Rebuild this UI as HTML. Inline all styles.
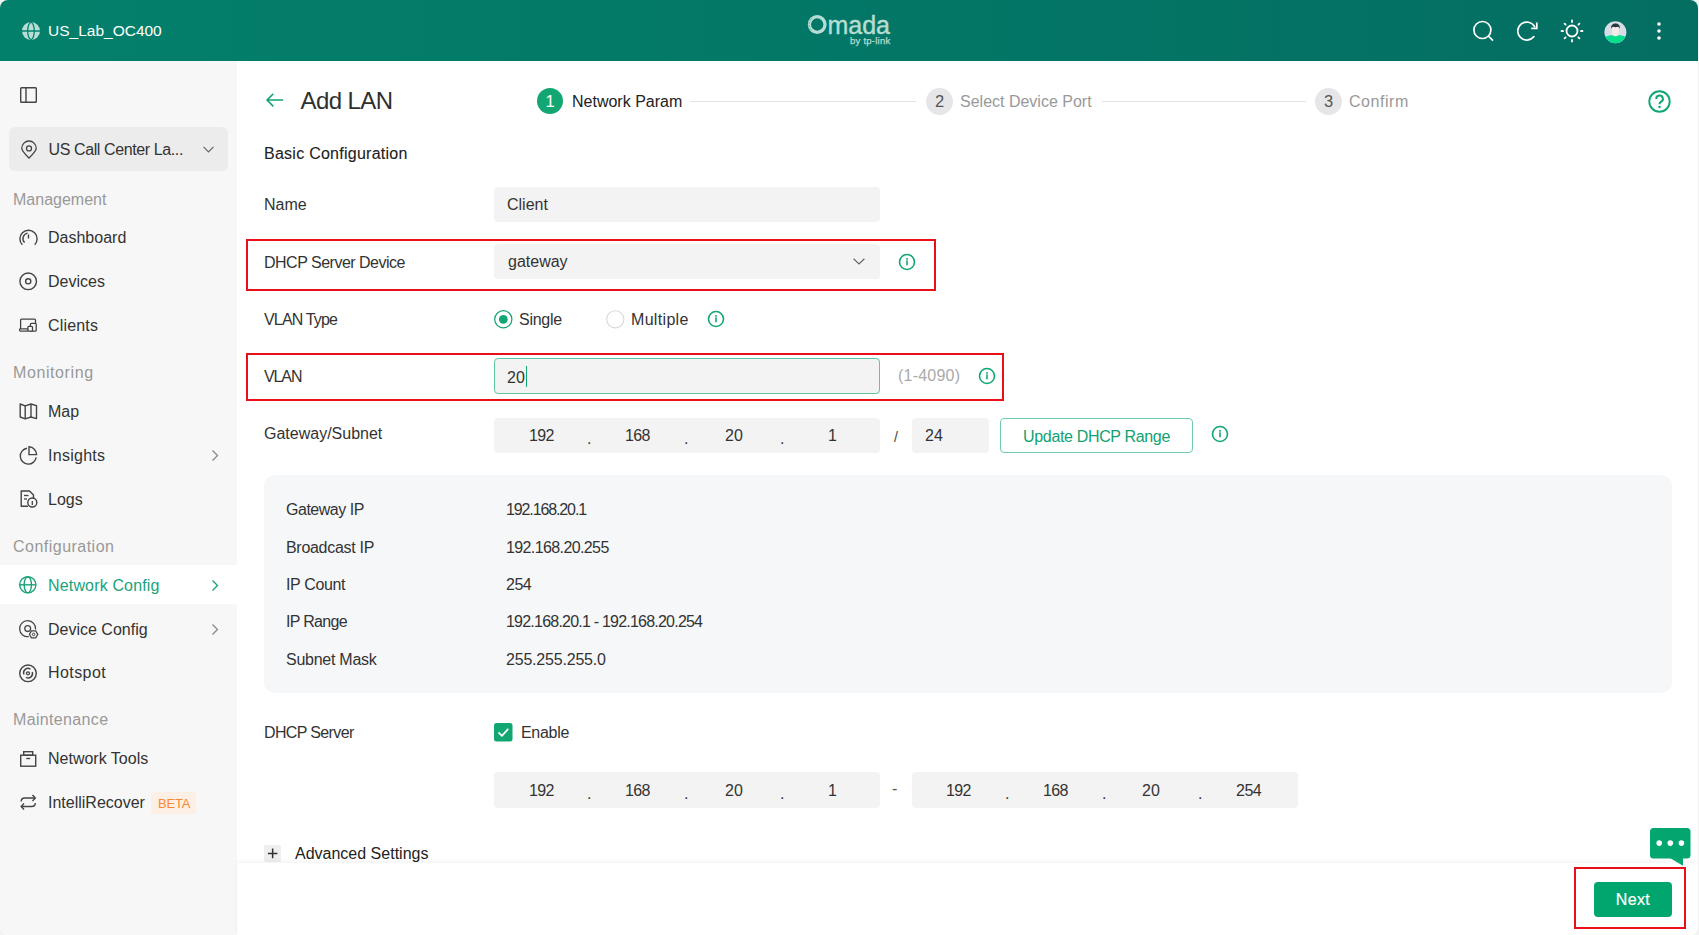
<!DOCTYPE html>
<html><head><meta charset="utf-8">
<style>
*{box-sizing:border-box;margin:0;padding:0}
html,body{width:1699px;height:935px;overflow:hidden;background:#f2f2f2;font-family:"Liberation Sans",sans-serif;color:#333}
.abs{position:absolute}
#win{position:absolute;left:0;top:0;width:1698px;height:935px;border-radius:8px;overflow:hidden;background:#fff}
#hdr{position:absolute;left:0;top:0;width:1698px;height:61px;background:linear-gradient(90deg,#03806b 0%,#037767 50%,#046e62 100%)}
#side{position:absolute;left:0;top:61px;width:237px;height:874px;background:#f7f7f7}
.t{position:absolute;white-space:nowrap;font-size:16px;line-height:20px}
.sec{color:#999;font-size:16px}
.nav{color:#333}
.lbl{color:#333}
.inp{position:absolute;background:#f3f3f3;border-radius:4px}
.red{position:absolute;border:2px solid #ea0e19}
svg{position:absolute;overflow:visible}
</style></head><body>
<div id="win">
<div id="hdr">
  <svg style="left:22px;top:22px" width="18" height="18" viewBox="0 0 18 18">
    <circle cx="9" cy="9" r="9" fill="#b8ddd5"/>
    <ellipse cx="9" cy="9" rx="3.3" ry="8.6" fill="none" stroke="#03806b" stroke-width="1.3"/>
    <line x1="0" y1="9" x2="18" y2="9" stroke="#03806b" stroke-width="1.3"/>
  </svg>
  <div class="t" style="left:48px;top:21px;color:#fff;font-size:15.5px">US_Lab_OC400</div>
  <svg style="left:806px;top:13px" width="24" height="24" viewBox="0 0 24 24">
    <circle cx="11.2" cy="11.5" r="7.8" fill="none" stroke="#b6ddd3" stroke-width="3.3"/>
    <path d="M5.8 5.2 A8.6 8.6 0 0 0 5.8 17.8" fill="none" stroke="#037a68" stroke-width="0.7" stroke-dasharray="0.6 0.9"/>
  </svg>
  <div class="t" style="left:827.5px;top:10.5px;color:#b6ddd3;font-size:25px;line-height:28px;-webkit-text-stroke:0.4px #b6ddd3;letter-spacing:-0.05px">mada</div>
  <div class="t" style="left:850px;top:36px;color:#b6ddd3;font-size:9.5px;line-height:10px;-webkit-text-stroke:0.25px #b6ddd3;letter-spacing:0.25px">by tp-link</div>
  <!-- search -->
  <svg style="left:1473px;top:20px" width="22" height="22" viewBox="0 0 22 22">
    <circle cx="9.4" cy="10" r="8.5" fill="none" stroke="#fff" stroke-width="1.7"/>
    <line x1="15.4" y1="16" x2="20" y2="20.6" stroke="#fff" stroke-width="1.7"/>
  </svg>
  <!-- refresh -->
  <svg style="left:1517px;top:20px" width="22" height="22" viewBox="0 0 22 22">
    <path d="M16.9 16.6 A9 9 0 1 1 17.6 6.6" fill="none" stroke="#fff" stroke-width="1.7" stroke-linecap="round"/>
    <path d="M19.8 2.6 V8.4 H14.2" fill="none" stroke="#fff" stroke-width="1.7"/>
  </svg>
  <!-- sun -->
  <svg style="left:1560.5px;top:20px" width="22" height="22" viewBox="0 0 22 22">
    <circle cx="11" cy="11" r="5.5" fill="none" stroke="#fff" stroke-width="1.8"/>
    <g stroke="#fff" stroke-width="1.8" stroke-linecap="round">
      <line x1="11" y1="0.5" x2="11" y2="2"/><line x1="11" y1="20" x2="11" y2="21.5"/>
      <line x1="0.5" y1="11" x2="2" y2="11"/><line x1="20" y1="11" x2="21.5" y2="11"/>
      <line x1="3.6" y1="3.6" x2="4.6" y2="4.6"/><line x1="17.4" y1="17.4" x2="18.4" y2="18.4"/>
      <line x1="3.6" y1="18.4" x2="4.6" y2="17.4"/><line x1="17.4" y1="4.6" x2="18.4" y2="3.6"/>
    </g>
  </svg>
  <!-- avatar -->
  <svg style="left:1604px;top:20.5px" width="23" height="23" viewBox="0 0 23 23">
    <defs><clipPath id="av"><circle cx="11.4" cy="11.3" r="11"/></clipPath></defs>
    <g clip-path="url(#av)">
      <rect width="23" height="23" fill="#d6dde6"/>
      <path d="M8.2 6 H14.8 V14.5 C14.8 16 13 16.5 11.5 16.5 C10 16.5 8.2 16 8.2 14.5 Z" fill="#f7ebe8"/>
      <path d="M-1 23 V16.6 C3 14.6 7 14.3 9 14.3 C10 15.6 13 15.6 14 14.3 C16 14.3 20 14.6 24 16.6 V23 Z" fill="#05de8c"/>
      <path d="M7 7.8 C6.8 4 9 2.6 11.5 2.6 C14 2.6 16.2 4 16 7.8 C15.3 6.6 14.6 5.8 13.8 5.8 C12.5 6.4 10.5 6.4 9.2 5.8 C8.4 5.8 7.7 6.6 7 7.8Z" fill="#263840"/>
    </g>
  </svg>
  <!-- kebab -->
  <svg style="left:1657px;top:22px" width="4" height="18" viewBox="0 0 4 18">
    <circle cx="2" cy="2" r="1.8" fill="#fff"/><circle cx="2" cy="9" r="1.8" fill="#fff"/><circle cx="2" cy="16" r="1.8" fill="#fff"/>
  </svg>
</div>

<div id="side">
  <!-- toggle -->
  <svg style="left:20px;top:25.5px" width="17" height="16" viewBox="0 0 17 16">
    <rect x="0.7" y="0.7" width="15.6" height="14.6" rx="0.8" fill="none" stroke="#444" stroke-width="1.4"/>
    <line x1="6" y1="0.7" x2="6" y2="15.3" stroke="#444" stroke-width="1.4"/>
  </svg>
  <div class="abs" style="left:9px;top:66px;width:219px;height:44px;background:#ececec;border-radius:6px"></div>
  <svg style="left:21px;top:80px" width="16" height="18" viewBox="0 0 16 18">
    <path d="M8 17 C3.8 12.8 0.8 10 0.8 7.2 A7.2 7.2 0 0 1 15.2 7.2 C15.2 10 12.2 12.8 8 17Z" fill="none" stroke="#444" stroke-width="1.3"/>
    <circle cx="8" cy="7.4" r="2.5" fill="none" stroke="#444" stroke-width="1.3"/>
  </svg>
  <div class="t nav" style="left:48.5px;top:79px;letter-spacing:-0.39px">US Call Center La...</div>
  <svg style="left:202.5px;top:84.5px" width="11" height="7" viewBox="0 0 11 7">
    <path d="M0.5 0.8 L5.5 5.8 L10.5 0.8" fill="none" stroke="#666" stroke-width="1.2"/>
  </svg>

  <div class="t sec" style="left:13px;top:129px">Management</div>
  <svg style="left:19px;top:168px" width="19" height="17" viewBox="0 0 19 17">
    <path d="M3.3 15.8 A8.6 8.6 0 1 1 15.7 15.8" fill="none" stroke="#444" stroke-width="1.4"/>
    <path d="M5.6 13.6 A5.6 5.6 0 0 1 8.6 4.1" fill="none" stroke="#444" stroke-width="1.4"/>
    <line x1="9.5" y1="5.6" x2="9.5" y2="9.6" stroke="#444" stroke-width="1.4"/>
  </svg>
  <div class="t nav" style="left:48px;top:167px">Dashboard</div>
  <svg style="left:19px;top:211px" width="19" height="19" viewBox="0 0 19 19">
    <circle cx="9.2" cy="9.3" r="8.3" fill="none" stroke="#444" stroke-width="1.4"/>
    <circle cx="9.2" cy="9.3" r="2.6" fill="none" stroke="#444" stroke-width="1.4"/>
  </svg>
  <div class="t nav" style="left:48px;top:211px">Devices</div>
  <svg style="left:19px;top:257px" width="19" height="15" viewBox="0 0 19 15">
    <path d="M1.6 11 V2.2 A1 1 0 0 1 2.6 1.2 H15.5 A1 1 0 0 1 16.5 2.2 V5" fill="none" stroke="#444" stroke-width="1.3"/>
    <rect x="0.6" y="10.9" width="8.4" height="2.2" rx="0.8" fill="none" stroke="#444" stroke-width="1.3"/>
    <rect x="11.4" y="5.3" width="5.8" height="7.8" rx="0.9" fill="#f7f7f7" stroke="#444" stroke-width="1.3"/>
    <rect x="8.9" y="8.4" width="4.6" height="4.7" rx="0.9" fill="#f7f7f7" stroke="#444" stroke-width="1.3"/>
  </svg>
  <div class="t nav" style="left:48px;top:255px;letter-spacing:0.18px">Clients</div>

  <div class="t sec" style="left:13px;top:302px;letter-spacing:0.6px">Monitoring</div>
  <svg style="left:19px;top:342px" width="19" height="17" viewBox="0 0 19 17">
    <path d="M1.2 1 L6.2 2.8 L12 1 L17.5 2.6 V15.6 L12 14 L6.2 15.8 L1.2 14 Z" fill="none" stroke="#444" stroke-width="1.4" stroke-linejoin="round"/>
    <line x1="6.2" y1="2.8" x2="6.2" y2="15.8" stroke="#444" stroke-width="1.4"/>
    <line x1="12" y1="1" x2="12" y2="14" stroke="#444" stroke-width="1.4"/>
  </svg>
  <div class="t nav" style="left:48px;top:341px">Map</div>
  <svg style="left:19px;top:385px" width="19" height="19" viewBox="0 0 19 19">
    <path d="M8 2.2 A8 8 0 1 0 17.2 11.4" fill="none" stroke="#444" stroke-width="1.4"/>
    <path d="M10 0.8 A8 8 0 0 1 17.6 8.6 H10 Z" fill="none" stroke="#444" stroke-width="1.4"/>
  </svg>
  <div class="t nav" style="left:48px;top:385px;letter-spacing:0.27px">Insights</div>
  <svg style="left:211px;top:388px" width="8" height="13" viewBox="0 0 8 13">
    <path d="M1.5 1.5 L6.5 6.5 L1.5 11.5" fill="none" stroke="#888" stroke-width="1.3"/>
  </svg>
  <svg style="left:20px;top:429px" width="18" height="18" viewBox="0 0 18 18">
    <path d="M8 16.3 H1.2 V1 H9.5 L13.5 5 V8.5" fill="none" stroke="#444" stroke-width="1.4" stroke-linejoin="round"/>
    <line x1="4" y1="5.5" x2="8.5" y2="5.5" stroke="#444" stroke-width="1.3"/>
    <line x1="4" y1="9" x2="7" y2="9" stroke="#444" stroke-width="1.3"/>
    <circle cx="12.3" cy="12.5" r="4.5" fill="none" stroke="#444" stroke-width="1.4"/>
    <line x1="12.3" y1="11" x2="12.3" y2="15" stroke="#444" stroke-width="1.3"/>
  </svg>
  <div class="t nav" style="left:48px;top:429px">Logs</div>

  <div class="t sec" style="left:13px;top:476px;letter-spacing:0.48px">Configuration</div>
  <div class="abs" style="left:0;top:504px;width:237px;height:39px;background:#fff"></div>
  <svg style="left:19px;top:515px" width="18" height="18" viewBox="0 0 18 18">
    <circle cx="8.8" cy="8.8" r="8.1" fill="none" stroke="#1aa37a" stroke-width="1.4"/>
    <ellipse cx="8.8" cy="8.8" rx="3.6" ry="8.1" fill="none" stroke="#1aa37a" stroke-width="1.4"/>
    <line x1="0.7" y1="8.8" x2="16.9" y2="8.8" stroke="#1aa37a" stroke-width="1.4"/>
  </svg>
  <div class="t" style="left:48px;top:515px;color:#1aa37a;letter-spacing:0.16px">Network Config</div>
  <svg style="left:211px;top:518px" width="8" height="13" viewBox="0 0 8 13">
    <path d="M1.5 1.5 L6.5 6.5 L1.5 11.5" fill="none" stroke="#1aa37a" stroke-width="1.4"/>
  </svg>
  <svg style="left:19px;top:559px" width="20" height="20" viewBox="0 0 20 20">
    <path d="M9.8 16.6 A8 8 0 1 1 16.6 9.5" fill="none" stroke="#444" stroke-width="1.3"/>
    <circle cx="8.7" cy="8.6" r="2.9" fill="none" stroke="#444" stroke-width="1.3"/>
    <path d="M10.4 14.4 L12.5 10.9 H16.7 L18.8 14.4 L16.7 17.9 H12.5 Z" fill="#f7f7f7" stroke="#444" stroke-width="1.2" stroke-linejoin="round"/>
    <circle cx="14.6" cy="14.4" r="1.3" fill="none" stroke="#444" stroke-width="1"/>
  </svg>
  <div class="t nav" style="left:48px;top:559px">Device Config</div>
  <svg style="left:211px;top:562px" width="8" height="13" viewBox="0 0 8 13">
    <path d="M1.5 1.5 L6.5 6.5 L1.5 11.5" fill="none" stroke="#888" stroke-width="1.3"/>
  </svg>
  <svg style="left:19px;top:603px" width="19" height="19" viewBox="0 0 19 19">
    <circle cx="9" cy="9.3" r="8.3" fill="none" stroke="#444" stroke-width="1.4"/>
    <path d="M5 10.5 A4.3 4.3 0 0 1 11.5 5.3" fill="none" stroke="#444" stroke-width="1.4"/>
    <path d="M13.2 8 A4.3 4.3 0 0 1 7 13.3" fill="none" stroke="#444" stroke-width="1.4"/>
    <circle cx="9" cy="9.3" r="1.5" fill="none" stroke="#444" stroke-width="1.3"/>
  </svg>
  <div class="t nav" style="left:48px;top:602px;letter-spacing:0.43px">Hotspot</div>

  <div class="t sec" style="left:13px;top:649px;letter-spacing:0.35px">Maintenance</div>
  <svg style="left:20px;top:690px" width="17" height="16" viewBox="0 0 17 16">
    <rect x="0.7" y="4.2" width="15" height="11" fill="none" stroke="#444" stroke-width="1.4"/>
    <rect x="3.7" y="0.7" width="9" height="3.5" fill="none" stroke="#444" stroke-width="1.4"/>
    <line x1="6.3" y1="7.5" x2="10.2" y2="7.5" stroke="#444" stroke-width="1.4"/>
  </svg>
  <div class="t nav" style="left:48px;top:688px">Network Tools</div>
  <svg style="left:20px;top:733px" width="17" height="17" viewBox="0 0 17 17">
    <path d="M1.2 7.5 C1.2 5.3 2.5 4 4.7 4 H15" fill="none" stroke="#444" stroke-width="1.4"/>
    <path d="M12.5 1 L15.3 4 L12.5 7" fill="none" stroke="#444" stroke-width="1.4"/>
    <path d="M15.3 9 C15.3 11.2 14 12.5 11.8 12.5 H1.5" fill="none" stroke="#444" stroke-width="1.4"/>
    <path d="M4 9.5 L1.2 12.5 L4 15.5" fill="none" stroke="#444" stroke-width="1.4"/>
  </svg>
  <div class="t nav" style="left:48px;top:732px">IntelliRecover</div>
  <div class="abs" style="left:151px;top:731px;width:45px;height:22px;background:#fdefe4;border-radius:3px"></div>
  <div class="t" style="left:158px;top:734px;font-size:13px;line-height:18px;color:#f78a30;letter-spacing:-0.19px">BETA</div>
</div>

<div id="main">
  <svg style="left:265.5px;top:93px" width="18" height="15" viewBox="0 0 18 15">
    <path d="M7.3 0.8 L1 7.1 L7.3 13.4 M1 7.1 H17.2" fill="none" stroke="#12a172" stroke-width="1.5"/>
  </svg>
  <div class="t" style="left:300.5px;top:87px;font-size:24px;line-height:28px;color:#303030;letter-spacing:-0.6px">Add LAN</div>

  <!-- steps -->
  <div class="abs" style="left:537px;top:88px;width:26px;height:26px;border-radius:50%;background:#12a772"></div>
  <div class="t" style="left:537px;top:91px;width:26px;text-align:center;color:#fff;font-size:16.5px">1</div>
  <div class="t" style="left:572px;top:92px;color:#222">Network Param</div>
  <div class="abs" style="left:690px;top:101px;width:226px;height:1px;background:#e3e3e3"></div>
  <div class="abs" style="left:925.5px;top:87.5px;width:27px;height:27px;border-radius:50%;background:#e6e6e8"></div>
  <div class="t" style="left:926px;top:91px;width:27px;text-align:center;color:#555;font-size:16.5px">2</div>
  <div class="t" style="left:960px;top:92px;color:#999">Select Device Port</div>
  <div class="abs" style="left:1102px;top:101px;width:204px;height:1px;background:#e3e3e3"></div>
  <div class="abs" style="left:1315px;top:87.5px;width:27px;height:27px;border-radius:50%;background:#e6e6e8"></div>
  <div class="t" style="left:1315px;top:91px;width:27px;text-align:center;color:#555;font-size:16.5px">3</div>
  <div class="t" style="left:1349px;top:92px;color:#999;letter-spacing:0.55px">Confirm</div>
  <svg style="left:1648px;top:90px" width="23" height="23" viewBox="0 0 23 23">
    <circle cx="11.5" cy="11.5" r="10.2" fill="none" stroke="#12a772" stroke-width="1.9"/>
    <path d="M8.3 8.9 A3.3 3.3 0 1 1 12.9 11.9 C11.9 12.4 11.5 13 11.5 14.3" fill="none" stroke="#12a772" stroke-width="2"/>
    <circle cx="11.5" cy="17.1" r="1.25" fill="#12a772"/>
  </svg>

  <div class="t" style="left:264px;top:144px;color:#222;-webkit-text-stroke:0.1px #222;letter-spacing:0.26px">Basic Configuration</div>

  <div class="t lbl" style="left:264px;top:195px">Name</div>
  <div class="inp" style="left:494px;top:187px;width:386px;height:35px"></div>
  <div class="t" style="left:507px;top:195px;color:#333">Client</div>

  <div class="red" style="left:246px;top:239px;width:690px;height:52px"></div>
  <div class="t lbl" style="left:264px;top:253px;letter-spacing:-0.5px">DHCP Server Device</div>
  <div class="inp" style="left:494px;top:244px;width:386px;height:35px"></div>
  <div class="t" style="left:508px;top:252px;color:#333">gateway</div>
  <svg style="left:853px;top:258px" width="12" height="7" viewBox="0 0 12 7">
    <path d="M0.6 0.8 L6 6 L11.4 0.8" fill="none" stroke="#666" stroke-width="1.2"/>
  </svg>

  <div class="t lbl" style="left:264px;top:310px;letter-spacing:-0.83px">VLAN Type</div>
  <svg style="left:494px;top:310px" width="19" height="19" viewBox="0 0 19 19">
    <circle cx="9.3" cy="9.3" r="8.6" fill="#fff" stroke="#12a772" stroke-width="1.2"/>
    <circle cx="9.3" cy="9.3" r="4.4" fill="#12a772"/>
  </svg>
  <div class="t" style="left:519px;top:310px;color:#333;letter-spacing:-0.26px">Single</div>
  <svg style="left:606px;top:310px" width="19" height="19" viewBox="0 0 19 19">
    <circle cx="9.3" cy="9.3" r="8.6" fill="#fff" stroke="#d9d9d9" stroke-width="1.1"/>
  </svg>
  <div class="t" style="left:631px;top:310px;color:#333;letter-spacing:0.32px">Multiple</div>

  <div class="red" style="left:246px;top:353px;width:758px;height:48px"></div>
  <div class="t lbl" style="left:264px;top:367px;letter-spacing:-1.1px">VLAN</div>
  <div class="inp" style="left:494px;top:358px;width:386px;height:36px;border:1px solid #5dc8a0;background:#f3f3f3"></div>
  <div class="t" style="left:507px;top:368px;color:#333">20</div>
  <div class="abs" style="left:525.5px;top:366px;width:1.2px;height:20.5px;background:#12a772"></div>
  <div class="t" style="left:898px;top:366px;color:#aaa;letter-spacing:0.22px">(1-4090)</div>

  <div class="t lbl" style="left:264px;top:424px">Gateway/Subnet</div>
  <div class="inp" style="left:494px;top:418px;width:386px;height:35px"></div>
  <div class="t" style="left:529px;top:426px;letter-spacing:-0.65px">192</div>
  <div class="t" style="left:587px;top:428.5px">.</div>
  <div class="t" style="left:625px;top:426px;letter-spacing:-0.65px">168</div>
  <div class="t" style="left:684px;top:428.5px">.</div>
  <div class="t" style="left:725px;top:426px">20</div>
  <div class="t" style="left:780px;top:428.5px">.</div>
  <div class="t" style="left:828px;top:426px">1</div>
  <div class="t" style="left:894px;top:427px;color:#444;font-size:14px">/</div>
  <div class="inp" style="left:912px;top:418px;width:77px;height:35px"></div>
  <div class="t" style="left:925px;top:426px">24</div>
  <div class="abs" style="left:1000px;top:418px;width:193px;height:35px;border:1.3px solid #6dcca8;border-radius:4px;background:#fff"></div>
  <div class="t" style="left:1000px;top:427px;width:193px;text-align:center;color:#12a172;letter-spacing:-0.34px">Update DHCP Range</div>

  <svg style="left:898px;top:253px" width="18" height="18" viewBox="0 0 18 18">
    <circle cx="9" cy="9" r="7.5" fill="none" stroke="#12a772" stroke-width="1.6"/>
    <rect x="8.2" y="5" width="1.6" height="1.7" fill="#12a772"/>
    <rect x="8.2" y="7.3" width="1.6" height="5" fill="#12a772"/>
  </svg>
  <svg style="left:706.5px;top:310px" width="18" height="18" viewBox="0 0 18 18">
    <circle cx="9" cy="9" r="7.5" fill="none" stroke="#12a772" stroke-width="1.6"/>
    <rect x="8.2" y="5" width="1.6" height="1.7" fill="#12a772"/>
    <rect x="8.2" y="7.3" width="1.6" height="5" fill="#12a772"/>
  </svg>
  <svg style="left:978px;top:367px" width="18" height="18" viewBox="0 0 18 18">
    <circle cx="9" cy="9" r="7.5" fill="none" stroke="#12a772" stroke-width="1.6"/>
    <rect x="8.2" y="5" width="1.6" height="1.7" fill="#12a772"/>
    <rect x="8.2" y="7.3" width="1.6" height="5" fill="#12a772"/>
  </svg>
  <svg style="left:1211px;top:424.5px" width="18" height="18" viewBox="0 0 18 18">
    <circle cx="9" cy="9" r="7.5" fill="none" stroke="#12a772" stroke-width="1.6"/>
    <rect x="8.2" y="5" width="1.6" height="1.7" fill="#12a772"/>
    <rect x="8.2" y="7.3" width="1.6" height="5" fill="#12a772"/>
  </svg>
  <!-- info panel -->
  <div class="abs" style="left:264px;top:475px;width:1408px;height:218px;background:#f6f7f9;border-radius:10px"></div>
  <div class="t lbl" style="left:286px;top:500px;letter-spacing:-0.48px">Gateway IP</div>
  <div class="t" style="left:506px;top:500px;letter-spacing:-1.12px">192.168.20.1</div>
  <div class="t lbl" style="left:286px;top:538px;letter-spacing:-0.3px">Broadcast IP</div>
  <div class="t" style="left:506px;top:538px;letter-spacing:-0.61px">192.168.20.255</div>
  <div class="t lbl" style="left:286px;top:575px;letter-spacing:-0.36px">IP Count</div>
  <div class="t" style="left:506px;top:575px;letter-spacing:-0.5px">254</div>
  <div class="t lbl" style="left:286px;top:612px;letter-spacing:-0.69px">IP Range</div>
  <div class="t" style="left:506px;top:612px;letter-spacing:-0.78px">192.168.20.1 - 192.168.20.254</div>
  <div class="t lbl" style="left:286px;top:650px;letter-spacing:-0.26px">Subnet Mask</div>
  <div class="t" style="left:506px;top:650px;letter-spacing:-0.2px">255.255.255.0</div>

  <div class="t lbl" style="left:264px;top:723px;letter-spacing:-0.64px">DHCP Server</div>
  <svg style="left:494px;top:723px" width="19" height="19" viewBox="0 0 19 19">
    <rect x="0" y="0" width="18.5" height="18.5" rx="2.5" fill="#12a772"/>
    <path d="M4.5 9.5 L8 12.8 L14.2 5.8" fill="none" stroke="#fff" stroke-width="1.8"/>
  </svg>
  <div class="t" style="left:521px;top:723px;color:#333;letter-spacing:-0.3px">Enable</div>

  <div class="inp" style="left:494px;top:772px;width:386px;height:36px"></div>
  <div class="t" style="left:529px;top:781px;letter-spacing:-0.65px">192</div>
  <div class="t" style="left:587px;top:783.5px">.</div>
  <div class="t" style="left:625px;top:781px;letter-spacing:-0.65px">168</div>
  <div class="t" style="left:684px;top:783.5px">.</div>
  <div class="t" style="left:725px;top:781px">20</div>
  <div class="t" style="left:780px;top:783.5px">.</div>
  <div class="t" style="left:828px;top:781px">1</div>
  <div class="t" style="left:892px;top:779px;color:#555">-</div>
  <div class="inp" style="left:912px;top:772px;width:386px;height:36px"></div>
  <div class="t" style="left:946px;top:781px;letter-spacing:-0.65px">192</div>
  <div class="t" style="left:1005px;top:783.5px">.</div>
  <div class="t" style="left:1043px;top:781px;letter-spacing:-0.65px">168</div>
  <div class="t" style="left:1102px;top:783.5px">.</div>
  <div class="t" style="left:1142px;top:781px">20</div>
  <div class="t" style="left:1198px;top:783.5px">.</div>
  <div class="t" style="left:1236px;top:781px;letter-spacing:-0.5px">254</div>

  <div class="abs" style="left:264px;top:845px;width:17px;height:17px;background:#efefef;border-radius:2px"></div>
  <svg style="left:264px;top:845px" width="17" height="17" viewBox="0 0 17 17">
    <path d="M3.9 8.4 H13.4 M8.65 3.6 V13.2" stroke="#333" stroke-width="1.5"/>
  </svg>
  <div class="t" style="left:295px;top:844px;color:#222">Advanced Settings</div>
</div>

<div class="abs" style="left:237px;top:863px;width:1461px;height:72px;background:#fff;box-shadow:0 -2px 4px rgba(0,0,0,0.05)"></div>

<div class="red" style="left:1574px;top:867px;width:112px;height:62px;border-width:2px"></div>
<div class="abs" style="left:1594px;top:882px;width:78px;height:35px;background:#00a66e;border-radius:4px"></div>
<div class="t" style="left:1594px;top:890px;width:78px;text-align:center;color:#fff;letter-spacing:0.35px;-webkit-text-stroke:0.2px #fff">Next</div>
<svg style="left:1650px;top:828px" width="41" height="38" viewBox="0 0 41 38">
  <rect x="0" y="0" width="40.5" height="30.5" rx="3.5" fill="#03a66f"/>
  <path d="M20 30 L33 37.8 V30 Z" fill="#03a66f"/>
  <circle cx="9.2" cy="15.1" r="2.8" fill="#fff"/><circle cx="20.3" cy="15.1" r="2.8" fill="#fff"/><circle cx="31.4" cy="15.1" r="2.8" fill="#fff"/>
</svg>
</div>
</body></html>
